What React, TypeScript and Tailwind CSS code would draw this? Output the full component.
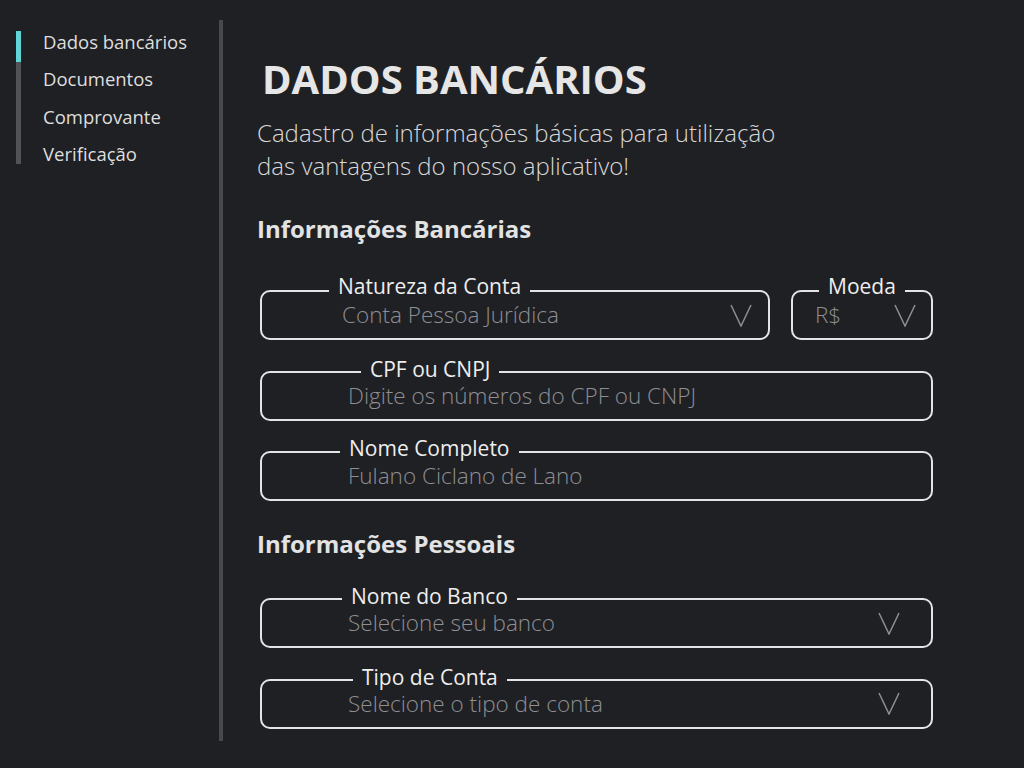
import React from 'react';

const menu = ['Dados bancários', 'Documentos', 'Comprovante', 'Verificação'];

function Chevron() {
  return (
    <svg width="22" height="23" viewBox="0 0 22 23" fill="none" className="shrink-0">
      <polyline points="1,1 11,22 21,1" stroke="#8e8e93" strokeWidth="1.5" strokeLinejoin="miter" />
    </svg>
  );
}

type FieldProps = {
  label: string;
  labelPos: string;
  placeholder: string;
  textPad: string;
  select?: boolean;
  chevronPad?: string;
  className?: string;
};

function Field({ label, labelPos, placeholder, textPad, select, chevronPad, className }: FieldProps) {
  return (
    <div
      className={`relative flex h-[50px] items-center rounded-[10px] border-2 border-[#e4e4e6] ${textPad} ${chevronPad ?? ''} ${className ?? ''}`}
    >
      <span
        className={`absolute ${labelPos} whitespace-nowrap bg-[#1f2024] px-[9px] text-[21px] leading-[22px] text-[#eeeeee]`}
      >
        {label}
      </span>
      <span className="whitespace-nowrap text-[22.5px] font-light leading-[26px] text-[#8e8e93]">{placeholder}</span>
      {select && (
        <span className="ml-auto flex items-center">
          <Chevron />
        </span>
      )}
    </div>
  );
}

export default function App() {
  return (
    <div className="flex h-screen w-full bg-[#1f2024] font-['Open_Sans',sans-serif]">
      {/* Side navigation */}
      <aside className="flex w-[219px] shrink-0 pl-[16px] pt-[23px]">
        <div className="mt-[8px] flex h-[133px] w-[5px] flex-col">
          <div className="h-[31px] bg-[#5fd5d8]" />
          <div className="flex-1 bg-[#515258]" />
        </div>
        <ul className="ml-[22px]">
          {menu.map((item) => (
            <li key={item} className="h-[37.33px] text-[18.5px] leading-[37px] text-[#dedede]">
              {item}
            </li>
          ))}
        </ul>
      </aside>

      {/* Divider */}
      <div className="my-[20px] h-[721px] w-[4px] shrink-0 bg-[#48494e]" />

      {/* Content */}
      <main className="flex w-[680px] flex-col pl-[34px] pt-[52px]">
        <h1 className="ml-[5px] text-[40px] font-bold leading-[54px] text-[#e6e6e6]">DADOS BANCÁRIOS</h1>
        <p className="mt-[11px] text-[24px] font-light leading-[32.5px] text-[#d8d8d8]">
          Cadastro de informações básicas para utilização
          <br />
          das vantagens do nosso aplicativo!
        </p>

        <h2 className="mt-[31px] text-[24px] font-bold leading-[32px] text-[#e3e3e3]">Informações Bancárias</h2>

        <div className="ml-[3px] mt-[45px] flex w-[673px] flex-col gap-[30.5px]">
          <div className="flex gap-[21px]">
            <Field
              label="Natureza da Conta"
              labelPos="-top-[17.5px] left-[67px]"
              placeholder="Conta Pessoa Jurídica"
              textPad="pl-[80px]"
              select
              chevronPad="pr-[16px]"
              className="w-[510px]"
            />
            <Field
              label="Moeda"
              labelPos="-top-[17.5px] left-[26px]"
              placeholder="R$"
              textPad="pl-[22px]"
              select
              chevronPad="pr-[15px]"
              className="w-[142px]"
            />
          </div>
          <Field
            label="CPF ou CNPJ"
            labelPos="-top-[15px] left-[99px]"
            placeholder="Digite os números do CPF ou CNPJ"
            textPad="pl-[86px]"
          />
          <Field
            label="Nome Completo"
            labelPos="-top-[16px] left-[78px]"
            placeholder="Fulano Ciclano de Lano"
            textPad="pl-[86px]"
          />
        </div>

        <h2 className="mt-[27px] text-[24px] font-bold leading-[32px] text-[#e3e3e3]">Informações Pessoais</h2>

        <div className="ml-[3px] mt-[38px] flex w-[673px] flex-col gap-[30.5px]">
          <Field
            label="Nome do Banco"
            labelPos="-top-[15px] left-[80px]"
            placeholder="Selecione seu banco"
            textPad="pl-[86px]"
            select
            chevronPad="pr-[31px]"
          />
          <Field
            label="Tipo de Conta"
            labelPos="-top-[15px] left-[91px]"
            placeholder="Selecione o tipo de conta"
            textPad="pl-[86px]"
            select
            chevronPad="pr-[31px]"
          />
        </div>
      </main>
    </div>
  );
}
